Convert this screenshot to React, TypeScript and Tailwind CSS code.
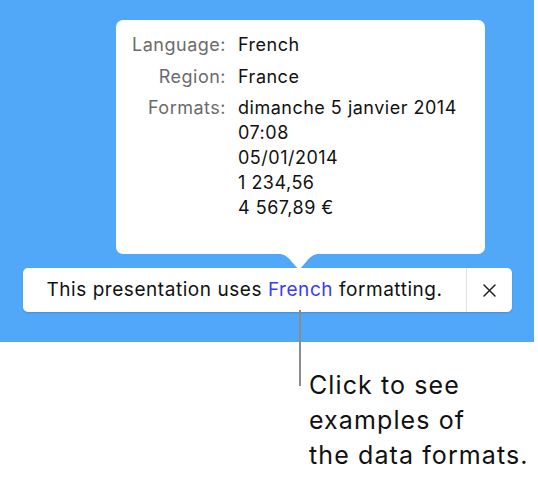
import React from 'react';

const rows: { label: string; values: string[] }[] = [
    { label: 'Language:', values: ['French'] },
    { label: 'Region:', values: ['France'] },
    { label: 'Formats:', values: ['dimanche 5 janvier 2014', '07:08', '05/01/2014', '1 234,56', '4 567,89 €'] },
];

export default function App() {
    return (
        <div className="relative w-[538px] h-[482px] bg-white overflow-hidden" style={{ fontFamily: 'Inter, "Liberation Sans", sans-serif' }}>
            {/* Blue canvas */}
            <div className="w-[534px] h-[342px] bg-[#52a8f8] pt-[20px]">
                {/* Popover */}
                <div className="relative ml-[116px] w-[369px] h-[234px] bg-white rounded-[7px] pt-[12px]">
                    <div className="grid grid-cols-[110px_1fr] gap-x-3 gap-y-[6.5px] text-[18px] leading-[25px] tracking-[0.5px]">
                        {rows.map((row) => (
                            <React.Fragment key={row.label}>
                                <div className="text-right text-[#6b6b6b]">{row.label}</div>
                                <div className="text-[#111]">
                                    {row.values.map((v) => (
                                        <div key={v}>{v}</div>
                                    ))}
                                </div>
                            </React.Fragment>
                        ))}
                    </div>
                    {/* Pointer */}
                    <svg className="absolute left-[153px] top-[233px]" width="60" height="17" viewBox="0 0 60 17">
                        <path d="M0 0 C 12 0 17 1 23 9 L 30 17 L 37 9 C 43 1 48 0 60 0 Z" fill="#ffffff" />
                    </svg>
                </div>

                {/* Notice bar */}
                <div className="relative ml-[23px] mt-[14px] w-[489px] h-[44px] bg-white rounded-[5px] flex shadow-[0_1px_2px_rgba(0,0,0,0.15)]">
                    <div className="flex-1 flex items-center justify-center text-[19px] tracking-[0.55px] text-[#111]">
                        <span>
                            This presentation uses <span className="text-[#3b3bf5]">French</span> formatting.
                        </span>
                    </div>
                    <div className="w-px bg-[#e2e2e2]" />
                    <div className="w-[45px] flex items-center justify-center">
                        <svg width="13" height="13" viewBox="0 0 13 13">
                            <path d="M1 1 L12 12 M12 1 L1 12" stroke="#222" strokeWidth="1.5" strokeLinecap="round" />
                        </svg>
                    </div>
                </div>
            </div>

            {/* Callout line */}
            <div className="absolute left-[299px] top-[310px] w-[2px] h-[76px] bg-[#8c8c8c]" />

            {/* Callout text */}
            <div className="ml-[309px] mt-[26px] text-[25px] leading-[35px] tracking-[1.1px] text-[#111]">
                <div>Click to see</div>
                <div>examples of</div>
                <div>the data formats.</div>
            </div>
        </div>
    );
}
